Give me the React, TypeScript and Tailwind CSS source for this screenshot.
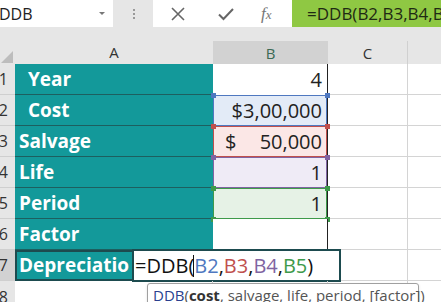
import React from "react";

const TEAL = "bg-[#13999a]";

type Hl = { color: string; bg: string } | null;

const rows: { n: string; label: string; indent?: boolean; value: React.ReactNode; hl: Hl; align?: string }[] = [
  { n: "1", label: "Year", indent: true, value: "4", hl: null },
  { n: "2", label: "Cost", indent: true, value: "$3,00,000", hl: { color: "#4f78c0", bg: "#e3ebf7" } },
  {
    n: "3",
    label: "Salvage",
    value: (
      <span className="flex w-full justify-between pl-[12px]">
        <span>$</span>
        <span>50,000</span>
      </span>
    ),
    hl: { color: "#c0504d", bg: "#fbe7e6" },
  },
  { n: "4", label: "Life", value: "1", hl: { color: "#8064a2", bg: "#efebf6" } },
  { n: "5", label: "Period", value: "1", hl: { color: "#3e9a4a", bg: "#e6f2e6" } },
  { n: "6", label: "Factor", value: "", hl: null },
];

function Corner({ color, pos }: { color: string; pos: string }) {
  return <span className={`absolute h-[5px] w-[5px] ${pos}`} style={{ background: color }} />;
}

export default function App() {
  const font = { fontFamily: '"Open Sans", "Noto Sans", sans-serif' };
  return (
    <div className="relative h-[302px] w-[441px] overflow-hidden bg-[#e6e6e6]" style={font}>
      {/* toolbar */}
      <div className="flex h-[27px]">
        <div className="relative flex w-[113px] items-center bg-white">
          <span className="ml-[-1px] text-[16px] text-[#222]">DDB</span>
          <span className="absolute left-[99px] top-[12px] h-0 w-0 border-x-[3px] border-t-[3px] border-x-transparent border-t-[#777]" />
        </div>
        <div className="flex w-[40px] flex-col items-center justify-center gap-[2px] pl-[1px]">
          <span className="h-[2px] w-[2px] bg-[#999]" />
          <span className="h-[2px] w-[2px] bg-[#999]" />
          <span className="h-[2px] w-[2px] bg-[#999]" />
        </div>
        <div className="flex w-[139px] items-center bg-white">
          <svg className="ml-[18px]" width="14" height="14" viewBox="0 0 14 14">
            <path d="M1 1 L13 13 M13 1 L1 13" stroke="#666" strokeWidth="1.6" />
          </svg>
          <svg className="ml-[33px]" width="16" height="14" viewBox="0 0 16 14">
            <path d="M1 7.5 L5.5 12 L15 2" stroke="#666" strokeWidth="2" fill="none" />
          </svg>
          <span
            className="ml-[27px] text-[17px] italic text-[#777]"
            style={{ fontFamily: '"Liberation Serif", serif' }}
          >
            f<span className="text-[13px]">x</span>
          </span>
        </div>
        <div className="flex flex-1 items-center overflow-hidden bg-[#8fc843] pl-[15px]">
          <span className="whitespace-nowrap text-[17px] text-[#1f2a14]">=DDB(B2,B3,B4,B5</span>
        </div>
      </div>

      {/* sheet */}
      <div className="mt-[14px]">
        {/* column headers */}
        <div className="grid h-[23px] grid-cols-[15px_198px_115px_80px_1fr]">
          <div className="relative bg-[#e6e6e6]">
            <span className="absolute bottom-[3px] right-[2px] h-0 w-0 border-b-[12px] border-l-[12px] border-b-[#bdbdbd] border-l-transparent" />
          </div>
          <div className="flex items-center justify-center border-b-2 border-[#13999a] text-[15px] text-[#333]">A</div>
          <div className="flex items-center justify-center border-b border-[#9a9a9a] bg-[#d2d2d2] text-[15px] text-[#3c6a55]">B</div>
          <div className="flex items-center justify-center border-r border-[#d0d0d0] text-[15px] text-[#333]">C</div>
          <div />
        </div>

        {/* rows */}
        <div className="bg-white">
          {rows.map((r) => (
            <div key={r.n} className="grid h-[31px] grid-cols-[15px_198px_115px_80px_1fr]">
              <div className="flex items-center justify-end overflow-hidden border-b border-[#cfcfcf] bg-[#e6e6e6] pr-[7px] text-[16px] text-[#333]">
                {r.n}
              </div>
              <div
                className={`flex items-center border-b border-[#1d5f5f] ${TEAL} text-[19px] font-bold text-white ${
                  r.indent ? "pl-[13px]" : "pl-[4px]"
                }`}
              >
                {r.label}
              </div>
              <div
                className="relative flex items-center justify-end border-r border-[#222] pr-[5px] text-[20px] text-[#222]"
                style={{ background: r.hl ? r.hl.bg : "#fff" }}
              >
                {r.value}
                {r.hl && (
                  <>
                    <span
                      className="pointer-events-none absolute inset-0 border"
                      style={{ borderColor: r.hl.color }}
                    />
                    <Corner color={r.hl.color} pos="left-[-2px] top-[-2px]" />
                    <Corner color={r.hl.color} pos="right-[-3px] top-[-2px]" />
                    <Corner color={r.hl.color} pos="left-[-2px] bottom-[-3px]" />
                    <Corner color={r.hl.color} pos="right-[-3px] bottom-[-3px]" />
                  </>
                )}
              </div>
              <div className="border-b border-r border-[#d4d4d4]" />
              <div className="border-b border-[#d4d4d4]" />
            </div>
          ))}

          {/* row 7 */}
          <div className="relative grid h-[31px] grid-cols-[15px_198px_115px_80px_1fr]">
            <div className="flex items-center justify-end overflow-hidden border-b border-[#cfcfcf] bg-[#d2d2d2] pr-[7px] text-[16px] text-[#333]">
              7
            </div>
            <div className={`flex items-center overflow-hidden border-2 border-[#1d4b4f] ${TEAL} pl-[2px] text-[19px] font-bold text-white whitespace-nowrap`}>
              Depreciatio
            </div>
            <div className="border-b border-r border-[#d4d4d4]" />
            <div className="border-b border-r border-[#d4d4d4]" />
            <div className="border-b border-[#d4d4d4]" />
            <div className="absolute left-[132px] top-[-1px] flex h-[33px] w-[209px] items-center border-2 border-[#1d4b4f] bg-white pl-[1px] text-[20px] text-[#111] whitespace-nowrap">
              <span>=DDB(</span>
              <span className="ml-[-1px] h-[22px] w-px bg-[#111]" />
              <span className="text-[#4f78c0]">B2</span>
              <span>,</span>
              <span className="text-[#c0504d]">B3</span>
              <span>,</span>
              <span className="text-[#8064a2]">B4</span>
              <span>,</span>
              <span className="text-[#3e9a4a]">B5</span>
              <span>)</span>
            </div>
          </div>

          {/* row 8 */}
          <div className="relative grid h-[31px] grid-cols-[15px_198px_115px_80px_1fr]">
            <div className="flex items-center justify-end overflow-hidden bg-[#e6e6e6] pr-[7px] text-[16px] text-[#333]">
              8
            </div>
            <div className="border-r border-[#d4d4d4]" />
            <div className="border-r border-[#d4d4d4]" />
            <div className="border-r border-[#d4d4d4]" />
            <div />
            <div className="absolute left-[147px] top-[2px] flex h-[24px] w-[272px] items-center rounded-[3px] border border-[#a0a0a0] bg-white pl-[5px] text-[15px] text-[#555] whitespace-nowrap shadow-sm">
              <span className="text-[#2a3f8f] underline">DDB</span>
              <span>(</span>
              <span className="font-bold text-[#333]">cost</span>
              <span>, salvage, life, period, [factor])</span>
            </div>
          </div>
        </div>
      </div>
    </div>
  );
}
